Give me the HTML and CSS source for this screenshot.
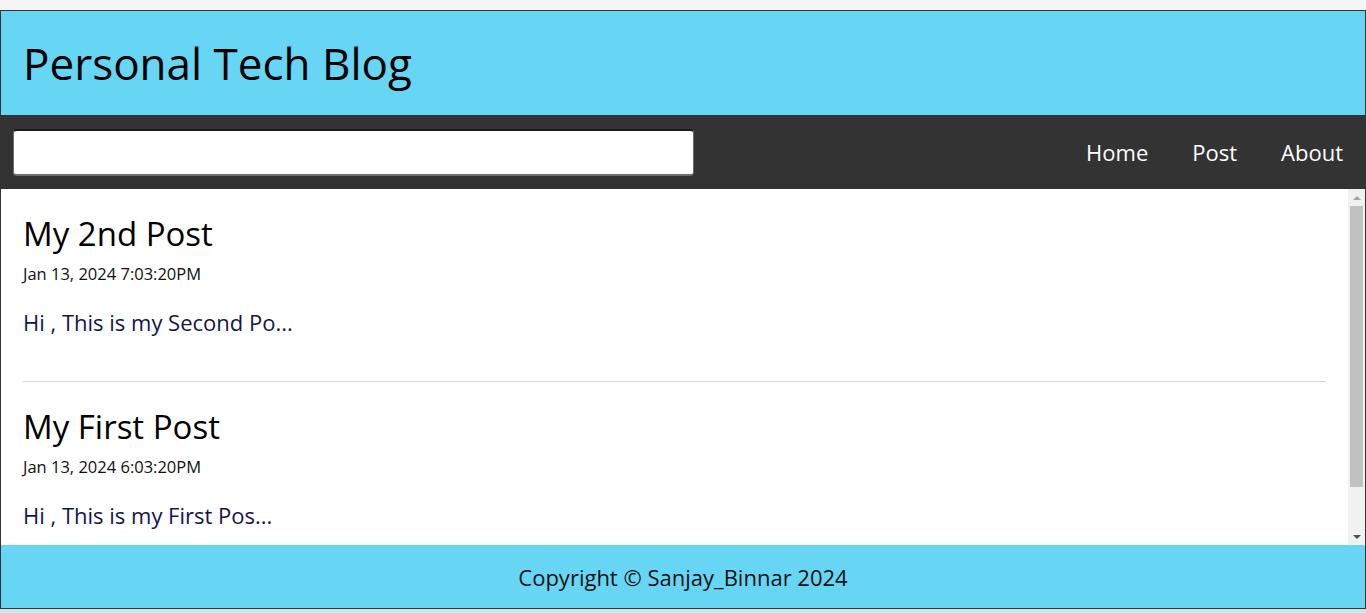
FILE: index.html
```html
<!DOCTYPE html>
<html lang="en">
<head>
<meta charset="utf-8">
<title>Personal Tech Blog</title>
<link rel="stylesheet" href="styles.css">
</head>
<body>
<div class="topstrip"></div>
<div class="app">
  <header class="header">
    <h1 class="title">Personal Tech Blog</h1>
  </header>
  <nav class="nav">
    <input class="search" type="text">
    <ul class="links">
      <li><a href="#">Home</a></li>
      <li><a href="#">Post</a></li>
      <li><a href="#">About</a></li>
    </ul>
  </nav>
  <div class="content">
    <main class="scroll">
      <article class="post">
        <h2 class="post-title">My 2nd Post</h2>
        <div class="post-date">Jan 13, 2024 7:03:20PM</div>
        <p class="post-body">Hi , This is my Second Po...</p>
        <hr class="divider">
      </article>
      <article class="post">
        <h2 class="post-title">My First Post</h2>
        <div class="post-date">Jan 13, 2024 6:03:20PM</div>
        <p class="post-body">Hi , This is my First Pos...</p>
        <hr class="divider">
      </article>
    </main>
    <div class="scrollbar" aria-hidden="true">
      <div class="sb-btn"><span class="arrow-up"></span></div>
      <div class="sb-track"><div class="sb-thumb"></div></div>
      <div class="sb-btn"><span class="arrow-down"></span></div>
    </div>
  </div>
  <footer class="footer">Copyright © Sanjay_Binnar 2024</footer>
</div>
<div class="bottomstrip"></div>
</body>
</html>
```

FILE: styles.css
```css
* { box-sizing: border-box; }
html, body { margin: 0; padding: 0; }
body {
  font-family: "Open Sans", "Noto Sans", sans-serif;
  background: #f5f5f5;
  overflow: hidden;
}
.topstrip { height: 10px; background: #f5f5f5; }
.bottomstrip { height: 6px; background: #cfe6ec; }
.app {
  height: 599px;
  border: 1px solid #333;
  display: flex;
  flex-direction: column;
  background: #fff;
}
.header {
  height: 104px;
  background: #67d6f5;
  display: flex;
  align-items: center;
  padding-left: 22px;
  flex-shrink: 0;
}
.title {
  margin: 0;
  font-weight: 400;
  font-size: 44px;
  color: #000;
  line-height: 1;
}
.nav {
  height: 74px;
  background: #333;
  display: flex;
  align-items: center;
  justify-content: space-between;
  padding-left: 12px;
  flex-shrink: 0;
}
.search {
  width: 681px;
  height: 47px;
  border: 1px solid #6b6b6b;
  border-top: 2px solid #1c1c1c;
  border-bottom: 2px solid #6e6e6e;
  border-radius: 4px;
  background: #fff;
  margin: 0;
}
.links {
  list-style: none;
  margin: 0;
  padding: 0;
  display: flex;
}
.links a {
  display: block;
  color: #fff;
  text-decoration: none;
  font-size: 22px;
  padding: 0 22px;
  line-height: 30px;
}
.content {
  height: 356px;
  display: flex;
  flex-shrink: 0;
}
.scroll {
  flex: 1;
  overflow: hidden;
  padding: 0 22px;
}
.scrollbar {
  width: 17px;
  background: #f1f1f1;
  display: flex;
  flex-direction: column;
}
.sb-btn {
  height: 17px;
  display: flex;
  align-items: center;
  justify-content: center;
}
.arrow-up {
  width: 0; height: 0;
  border-left: 4px solid transparent;
  border-right: 4px solid transparent;
  border-bottom: 4px solid #a3a3a3;
}
.arrow-down {
  width: 0; height: 0;
  border-left: 4px solid transparent;
  border-right: 4px solid transparent;
  border-top: 4px solid #505050;
}
.sb-track { flex: 1; padding: 0 2px; }
.sb-thumb { height: 281px; background: #c1c1c1; }
.post { padding-top: 25px; }
.post-title {
  margin: 0;
  font-size: 33px;
  font-weight: 400;
  line-height: 40px;
  color: #000;
}
.post-date {
  margin-top: 10px;
  font-size: 16.5px;
  line-height: 20px;
  color: #111;
}
.post-body {
  margin: 24px 0 0;
  font-size: 22px;
  line-height: 28px;
  color: #15154a;
}
.divider {
  margin: 45px 0 0;
  border: 0;
  border-top: 1px solid #d6d6d6;
  height: 0;
}
.footer {
  flex: 1;
  background: #67d6f5;
  display: flex;
  align-items: center;
  justify-content: center;
  font-size: 22px;
  color: #111;
}
```
